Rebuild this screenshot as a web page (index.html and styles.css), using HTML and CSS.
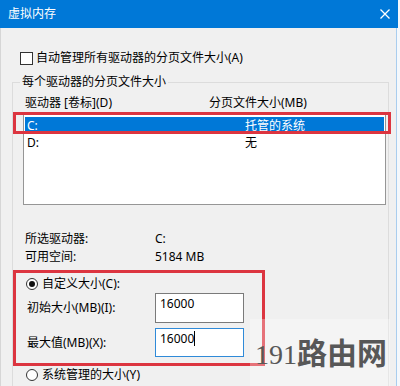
FILE: index.html
```html
<!DOCTYPE html>
<html lang="zh-CN">
<head>
<meta charset="utf-8">
<title>虚拟内存</title>
<link rel="stylesheet" href="styles.css">
</head>
<body>
<div class="window">
  <div class="titlebar">
    <span class="title">虚拟内存</span>
    <svg class="close" width="10" height="10" viewBox="0 0 10 10"><path d="M0.5 0.5 L9.5 9.5 M9.5 0.5 L0.5 9.5" stroke="#fff" stroke-width="1.3" fill="none"/></svg>
  </div>
  <div class="check-row"><span class="checkbox"></span><span>自动管理所有驱动器的分页文件大小(A)</span></div>
  <fieldset class="group">
    <legend>每个驱动器的分页文件大小</legend>
    <div class="list-head"><span>驱动器 [卷标](D)</span><span>分页文件大小(MB)</span></div>
    <div class="list">
      <div class="row selected"><span>C:</span><span>托管的系统</span></div>
      <div class="row"><span>D:</span><span>无</span></div>
    </div>
    <div class="info">
      <span>所选驱动器:</span><span>C:</span>
      <span>可用空间:</span><span>5184 MB</span>
    </div>
    <div class="radio-row"><span class="radio checked"></span><span>自定义大小(C):</span></div>
    <div class="field"><span>初始大小(MB)(I):</span><div class="input">16000</div></div>
    <div class="field field-2"><span>最大值(MB)(X):</span><div class="input focus">16000<span class="caret"></span></div></div>
    <div class="radio-row radio-row-2"><span class="radio"></span><span>系统管理的大小(Y)</span></div>
  </fieldset>
  <div class="highlight hl-drive"></div>
  <div class="highlight hl-custom"></div>
  <div class="watermark"><span class="wm-num">191</span><span class="wm-cn">路由网</span></div>
</div>
</body>
</html>
```
FILE: styles.css
```css
html, body {
  margin: 0;
  padding: 0;
  background: #f4f8fc;
}
.window {
  position: relative;
  width: 400px;
  height: 386px;
  overflow: hidden;
  background: #f0f0f0;
  box-shadow: inset 1px 0 0 #d6d6d6, inset -3px 0 0 #f4f8fc, inset -4px 0 0 #a9cdee;
  font: 12px/16px "Noto Sans", "Noto Sans CJK SC", sans-serif;
  color: #000;
}
.titlebar {
  height: 28px;
  background: #0078d7;
  color: #fff;
  display: flex;
  align-items: center;
  justify-content: space-between;
  padding: 0 8px 0 8px;
  box-sizing: border-box;
  width: 398px;
}
.title {
  font-size: 12px;
}
.close {
  display: block;
  margin-top: -1px;
}
.check-row {
  margin-top: 22px;
  padding-left: 20px;
  height: 16px;
  display: flex;
  align-items: center;
  gap: 3px;
}
.checkbox {
  width: 13px;
  height: 13px;
  box-sizing: border-box;
  border: 1px solid #333;
  background: #fff;
}
.group {
  box-sizing: border-box;
  width: 377px;
  height: 400px;
  margin: 8px 0 0 12px;
  padding: 5px 0 0 0;
  border: 1px solid #dcdcdc;
  min-inline-size: 0;
}
.group legend {
  padding: 0 2px;
  margin-left: 7px;
  line-height: 16px;
}
.list-head {
  display: grid;
  grid-template-columns: 184px auto;
  padding-left: 12px;
  height: 16px;
}
.list {
  box-sizing: border-box;
  margin: 3px 0 0 10px;
  width: 363px;
  height: 91px;
  border: 1px solid #969696;
  background: #fff;
  padding-top: 2px;
}
.row {
  display: grid;
  grid-template-columns: 218px auto;
  margin: 0 1px;
  height: 17px;
  line-height: 17px;
  padding-left: 2px;
}
.row.selected {
  background: #0078d7;
  color: #fff;
}
.info {
  margin-top: 25px;
  padding-left: 12px;
  display: grid;
  grid-template-columns: 130px auto;
  line-height: 18px;
}
.radio-row {
  margin-top: 10px;
  padding-left: 13px;
  height: 16px;
  display: flex;
  align-items: center;
  gap: 4px;
}
.radio {
  width: 12px;
  height: 12px;
  box-sizing: border-box;
  border: 1px solid #333;
  border-radius: 50%;
  background: #fff;
  display: flex;
  align-items: center;
  justify-content: center;
}
.radio.checked::after {
  content: "";
  width: 6px;
  height: 6px;
  border-radius: 50%;
  background: #111;
}
.field {
  margin-top: 1px;
  padding-left: 14px;
  display: grid;
  grid-template-columns: 128px 89px;
  align-items: center;
}
.field-2 {
  margin-top: 5px;
}
.input {
  box-sizing: border-box;
  height: 30px;
  border: 1px solid #7a7a7a;
  background: #fff;
  padding: 2px 0 0 4px;
  line-height: 16px;
}
.input.focus {
  height: 29px;
  border-color: #2f8ad8;
}
.caret {
  display: inline-block;
  width: 1px;
  height: 15px;
  background: #000;
  vertical-align: -3px;
}
.radio-row-2 {
  margin-top: 10px;
}
.highlight {
  position: absolute;
  box-sizing: border-box;
  border: 3px solid #dc3540;
}
.hl-drive {
  left: 13px;
  top: 112px;
  width: 378px;
  height: 22px;
}
.hl-custom {
  left: 13px;
  top: 270px;
  width: 252px;
  height: 96px;
}
.watermark {
  position: absolute;
  left: 250px;
  top: 319px;
  width: 140px;
  height: 67px;
  box-sizing: border-box;
  padding: 17px 0 0 5px;
  background: rgba(255, 255, 255, 0.3);
  color: #575757;
  white-space: nowrap;
  line-height: 30px;
}
.wm-num {
  font-family: "Liberation Serif", serif;
  font-size: 28px;
}
.wm-cn {
  font-family: "Noto Sans CJK SC", sans-serif;
  font-weight: 700;
  font-size: 30px;
}
```
